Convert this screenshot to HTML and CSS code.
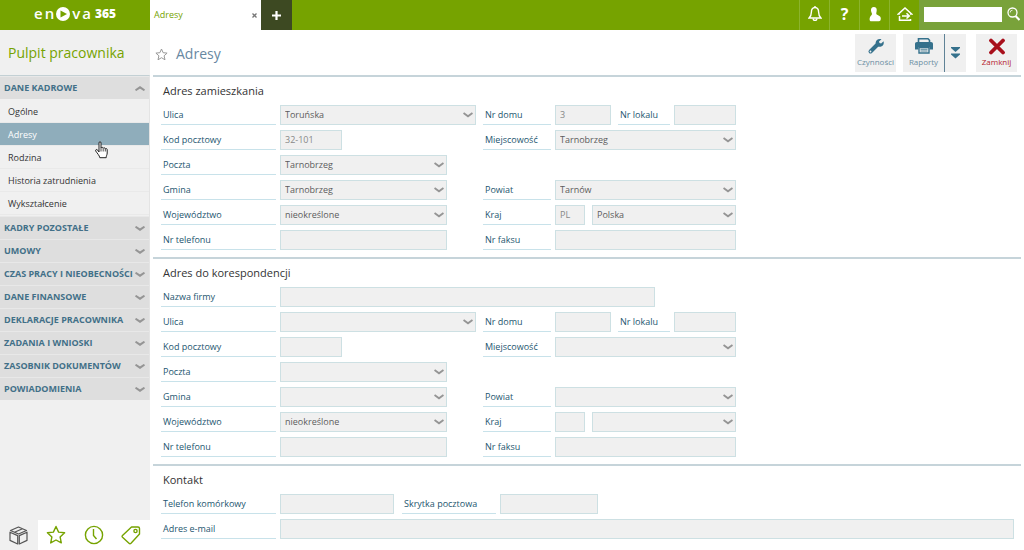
FILE: index.html
```html
<!DOCTYPE html>
<html lang="pl">
<head>
<meta charset="utf-8">
<title>Adresy - enova365</title>
<link rel="stylesheet" href="styles.css">
</head>
<body>
<header class="topbar">
  <div class="logo"><span>e</span><span>n</span>
    <svg width="14" height="14" viewBox="0 0 14 14"><circle cx="7" cy="7" r="7" fill="#fff"/><path d="M4.500 3.500 11 7 4.500 10.500z" fill="#76a300"/></svg>
    <span>v</span><span>a</span><b>365</b>
  </div>
  <div class="tab"><a href="#adresy">Adresy</a><button class="tab-close" aria-label="Zamknij kartę"><svg width="5" height="5" viewBox="0 0 5 5"><path d="M.5.5l4 4m0-4l-4 4" stroke="#777" stroke-width="1.3"/></svg></button></div>
  <button class="tab-add" aria-label="Nowa karta"><svg width="9" height="9" viewBox="0 0 9 9"><path d="M4.500 0v9M0 4.500h9" stroke="#fff" stroke-width="2.200"/></svg></button>
  <nav class="tools">
    <button aria-label="Powiadomienia"><svg width="14" height="16" viewBox="0 0 14 16" fill="none" stroke="#fff" stroke-width="1.4"><path d="M7 1.500C4.300 1.500 3.400 3.600 3.400 6c0 3-.6 4.300-2.300 6h11.800c-1.700-1.700-2.300-3-2.300-6 0-2.400-.9-4.500-3.600-4.500z"/><path d="M5.200 12.500a1.800 1.900 0 0 0 3.600 0M7 0v2"/></svg></button>
    <button class="help">?</button>
    <button aria-label="Użytkownik"><svg width="12" height="15" viewBox="0 0 12 15" fill="#fff"><path d="M4.800 0C7 0 7.900 1.500 7.700 3.500 7.600 5 7.200 5.800 7.300 7c.2 1 4.400 1.500 4.500 4.300 0 2-.5 3-2 3H2.500c-1.500 0-2-1-1.900-2.600C.8 9 3 8.300 3 7c0-1-.9-2-1-3.500C1.900 1.500 2.900 0 4.800 0z"/></svg></button>
    <button aria-label="Wyjście"><svg width="16" height="15" viewBox="0 0 16 15" fill="none" stroke="#fff" stroke-width="1.500"><path d="M2.500 9v4.200h11V12M2.800 7H1.500L8 1l6.500 6H13M5 9h7M9.500 6.300 12.300 9l-2.800 2.500"/></svg></button>
  </nav>
  <form class="search">
    <input type="search" aria-label="Szukaj">
    <button type="button" aria-label="Szukaj"><svg width="13" height="14" viewBox="0 0 13 14" fill="none" stroke="#fff"><circle cx="5.500" cy="5.500" r="4.500" stroke-width="1.300"/><path d="M3.200 5.500a2.300 2.300 0 0 1 2.300-2.300" stroke-width=".8"/><path d="m8.500 9 4 4" stroke-width="2.200"/></svg></button>
  </form>
</header>
<div class="shell">
  <aside class="sidebar">
    <h1 class="side-title">Pulpit pracownika</h1>
    <nav class="menu">
      <button class="group open">DANE KADROWE</button>
      <ul class="sub">
        <li><a href="#ogolne">Ogólne</a></li>
        <li class="current"><a href="#adresy">Adresy</a>
          <svg class="pointer" width="13" height="18" viewBox="0 0 13 18"><path d="M4 11V2c0-1.800 2-1.800 2 0v5c.3-1 2-1 2.200.3.400-.9 1.900-.7 2.100.6.500-.7 1.900-.5 1.900.8V12c0 2-1 2.500-1 4.700H4.800C4.500 14.500 2.400 12.600.7 10c-.5-1.500 1-2 1.900-1L4 11z" fill="#fff" stroke="#222"/><path d="M6 7v3.500M8.200 7.500v3M10.300 8v2.500" stroke="#222" stroke-width=".8"/></svg></li>
        <li><a href="#rodzina">Rodzina</a></li>
        <li><a href="#historia">Historia zatrudnienia</a></li>
        <li><a href="#wyksztalcenie">Wykształcenie</a></li>
      </ul>
      <button class="group">KADRY POZOSTAŁE</button>
      <button class="group">UMOWY</button>
      <button class="group">CZAS PRACY I NIEOBECNOŚCI</button>
      <button class="group">DANE FINANSOWE</button>
      <button class="group">DEKLARACJE PRACOWNIKA</button>
      <button class="group">ZADANIA I WNIOSKI</button>
      <button class="group">ZASOBNIK DOKUMENTÓW</button>
      <button class="group">POWIADOMIENIA</button>
    </nav>
    <div class="side-foot">
      <button class="active" aria-label="Moduły"><svg width="19" height="19" viewBox="0 0 19 19" fill="none" stroke="#555" stroke-width="1.200" stroke-linejoin="round"><path d="M9.500 1 17.500 4.500 9.500 8 1.500 4.500zM1 6.200 8.700 9.600V18L1 14.400zM18 6.200 10.300 9.600V18L18 14.400zM5.500 6.200 13.500 2.800"/></svg></button>
      <button aria-label="Ulubione"><svg width="20" height="20" viewBox="0 0 20 20" fill="none" stroke="#76a300" stroke-width="1.400" stroke-linejoin="round"><path d="m10 1.500 2.600 5.600 6 .7-4.500 4.100 1.200 6L10 15l-5.300 2.900 1.200-6L1.400 7.800l6-.7z"/></svg></button>
      <button aria-label="Historia"><svg width="20" height="20" viewBox="0 0 20 20" fill="none" stroke="#76a300" stroke-width="1.400"><circle cx="10" cy="10" r="8.600"/><path d="M9.500 4v6.500l3 3.500"/></svg></button>
      <button aria-label="Etykiety"><svg width="20" height="20" viewBox="0 0 20 20" fill="none" stroke="#76a300" stroke-width="1.400" stroke-linejoin="round"><path d="M1.500 10.500 10.500 2H17c1 0 1.500.5 1.500 1.500V9l-8.500 9.200c-.7.700-1.300.7-2 0l-6.500-6c-.6-.6-.6-1.100 0-1.700z"/><circle cx="14.500" cy="6" r="1.600"/></svg></button>
    </div>
  </aside>
  <main class="content">
    <div class="page-head">
      <svg width="13" height="13" viewBox="0 0 13 13" fill="none" stroke="#999" stroke-width="1"><path d="m6.500 1 1.600 3.700 4 .4-3 2.700.9 4-3.500-2.100L3 11.800l.9-4-3-2.700 4-.4z"/></svg>
      <h2>Adresy</h2>
      <div class="actions">
        <button class="action"><svg width="18" height="18" viewBox="0 0 18 18"><path d="M3.500 14.500 10 8" stroke="#35718c" stroke-width="4" stroke-linecap="round"/><path d="M14.500 2.200 12 4.600l.5 1.500 1.600.4 2.500-2.200c.6 2.200-.2 4.400-2.400 5.300-1.800.7-3.800 0-4.900-1.500-1-1.600-.9-3.700.6-5.100 1.300-1.200 3-1.300 4.600-.8z" fill="#35718c"/><circle cx="3.500" cy="14.500" r=".9" fill="#f0f0f0"/></svg><span>Czynności</span></button>
        <div class="split">
          <button class="action"><svg width="18" height="18" viewBox="0 0 18 18"><path d="M3.500 5V1.800h9.500l1.500 1.500V5" fill="#f0f0f0" stroke="#35718c" stroke-width="1.600"/><path d="M2 5h14c1.300 0 2 .7 2 2v5.500h-3.500V10h-11v2.500H0V7c0-1.300.7-2 2-2z" fill="#35718c"/><path d="M4 10.500h10V16H4z" fill="#f0f0f0" stroke="#35718c" stroke-width="1.400"/><path d="M5.500 12.300h7M5.500 14h7" stroke="#35718c" stroke-width=".8"/></svg><span>Raporty</span></button>
          <button class="more" aria-label="Więcej raportów"><svg width="9" height="12" viewBox="0 0 9 12" fill="#35718c"><path d="M0 0h9v1L4.500 5 0 1zM0 6.500h9v1l-4.500 4L0 7.500z"/></svg></button>
        </div>
        <button class="action close"><svg width="18" height="18" viewBox="0 0 18 18"><path d="M3 3.500 15 15.500M15 3.500 3 15.500" stroke="#a8101c" stroke-width="3.800" stroke-linecap="round"/></svg><span>Zamknij</span></button>
      </div>
    </div>

    <section class="block">
      <h3>Adres zamieszkania</h3>
      <div class="rows">
        <div class="row">
          <label for="a1">Ulica</label><div class="left"><select id="a1" class="w-street"><option>Toruńska</option></select></div>
          <label class="l2" for="a2">Nr domu</label><input id="a2" class="w-house" value="3"><label class="l3" for="a3">Nr lokalu</label><input id="a3" class="w-flat">
        </div>
        <div class="row">
          <label for="a4">Kod pocztowy</label><div class="left"><input id="a4" class="w-flat" value="32-101"></div>
          <label class="l2" for="a5">Miejscowość</label><select id="a5" class="w-right"><option>Tarnobrzeg</option></select>
        </div>
        <div class="row"><label for="a6">Poczta</label><select id="a6" class="w-left"><option>Tarnobrzeg</option></select></div>
        <div class="row">
          <label for="a7">Gmina</label><div class="left"><select id="a7" class="w-left"><option>Tarnobrzeg</option></select></div>
          <label class="l2" for="a8">Powiat</label><select id="a8" class="w-right"><option>Tarnów</option></select>
        </div>
        <div class="row">
          <label for="a9">Województwo</label><div class="left"><select id="a9" class="w-left"><option>nieokreślone</option></select></div>
          <label class="l2" for="a10">Kraj</label><input id="a10" class="w-code" value="PL"><select class="w-country" aria-label="Nazwa kraju"><option>Polska</option></select>
        </div>
        <div class="row">
          <label for="a11">Nr telefonu</label><div class="left"><input id="a11" class="w-left"></div>
          <label class="l2" for="a12">Nr faksu</label><input id="a12" class="w-right">
        </div>
      </div>
    </section>

    <section class="block">
      <h3>Adres do korespondencji</h3>
      <div class="rows">
        <div class="row"><label for="b0">Nazwa firmy</label><input id="b0" class="w-company"></div>
        <div class="row">
          <label for="b1">Ulica</label><div class="left"><select id="b1" class="w-street"><option></option></select></div>
          <label class="l2" for="b2">Nr domu</label><input id="b2" class="w-house"><label class="l3" for="b3">Nr lokalu</label><input id="b3" class="w-flat">
        </div>
        <div class="row">
          <label for="b4">Kod pocztowy</label><div class="left"><input id="b4" class="w-flat"></div>
          <label class="l2" for="b5">Miejscowość</label><select id="b5" class="w-right"><option></option></select>
        </div>
        <div class="row"><label for="b6">Poczta</label><select id="b6" class="w-left"><option></option></select></div>
        <div class="row">
          <label for="b7">Gmina</label><div class="left"><select id="b7" class="w-left"><option></option></select></div>
          <label class="l2" for="b8">Powiat</label><select id="b8" class="w-right"><option></option></select>
        </div>
        <div class="row">
          <label for="b9">Województwo</label><div class="left"><select id="b9" class="w-left"><option>nieokreślone</option></select></div>
          <label class="l2" for="b10">Kraj</label><input id="b10" class="w-code"><select class="w-country" aria-label="Nazwa kraju"><option></option></select>
        </div>
        <div class="row">
          <label for="b11">Nr telefonu</label><div class="left"><input id="b11" class="w-left"></div>
          <label class="l2" for="b12">Nr faksu</label><input id="b12" class="w-right">
        </div>
      </div>
    </section>

    <section class="block">
      <h3>Kontakt</h3>
      <div class="rows">
        <div class="row"><label for="c1">Telefon komórkowy</label><input id="c1" class="w-mobile"><label class="l4" for="c2">Skrytka pocztowa</label><input id="c2" class="w-box"></div>
        <div class="row"><label for="c3">Adres e-mail</label><input id="c3" type="email" class="w-full"></div>
      </div>
    </section>
  </main>
</div>
</body>
</html>
```
FILE: styles.css
```css
* { box-sizing: border-box; }
body {
  margin: 0;
  min-height: 100vh;
  display: flex;
  flex-direction: column;
  background: #fff;
  color: #333;
  font: 9px/14px "Open Sans", sans-serif;
}
button, input, select { font: inherit; color: inherit; margin: 0; padding: 0; border: 0; border-radius: 0; background: none; }
button { display: flex; align-items: center; justify-content: center; cursor: pointer; }
svg { display: block; flex: none; }
a { color: inherit; text-decoration: none; }
h1, h2, h3 { margin: 0; font-weight: 400; }

/* top bar */
.topbar { display: flex; height: 30px; background: #76a300; color: #fff; }
.logo { width: 150px; display: flex; align-items: center; justify-content: center; gap: 2px; font-size: 15px; font-weight: 600; line-height: 26px; padding-bottom: 4px; }
.logo svg { margin-top: 2px; }
.logo b { font-size: 12px; line-height: 28px; margin: 2px 0 0 2px; }
.tab { width: 111px; padding: 0 4px; display: flex; align-items: center; justify-content: space-between; background: #fff; color: #76a300; }
.tab-add { width: 31px; background: #3d4922; }
.tools { margin-left: auto; display: flex; }
.tools button { width: 30px; border-left: 1px solid #8cb42c; padding-bottom: 2px; }
.tools .help { font-size: 16px; font-weight: 700; }
.search { width: 105px; display: flex; align-items: center; gap: 5px; padding: 0 4px 2px 5px; background: #79a23a; }
.search input { flex: 1; min-width: 0; height: 15px; background: #fff; color: #444; }

/* sidebar */
.shell { flex: 1; display: flex; }
.sidebar { width: 150px; flex: none; display: flex; flex-direction: column; background: #f0f0f0; }
.side-title { height: 45px; padding-left: 8px; font-size: 14px; line-height: 45px; color: #76a300; white-space: nowrap; }
.menu { border-top: 1px solid #c3d0d4; border-right: 1px solid #e4e4e4; }
.group {
  width: 100%; height: 23px; padding: 0 4px; justify-content: space-between;
  border-top: 1px solid #e8e8e8; background: #dedede; color: #427088;
  font-weight: 700; white-space: nowrap;
}
.group::after {
  content: ""; width: 10px; height: 5px;
  background: url("data:image/svg+xml,%3Csvg xmlns='http://www.w3.org/2000/svg' width='10' height='5'%3E%3Cpath d='M.5.7 5 3.700 9.500.7' fill='none' stroke='%23959595' stroke-width='2'/%3E%3C/svg%3E");
}
.group.open::after { transform: rotate(180deg); }
.sub { list-style: none; margin: 0; padding: 1px 0; }
.sub li { position: relative; height: 23px; padding-left: 8px; line-height: 23px; border-bottom: 1px solid #e9e9e9; }
.sub .current { background: #8fadbb; color: #fff; }
.pointer { position: absolute; left: 95px; top: 18px; z-index: 1; }
.side-foot { display: flex; height: 30px; margin-top: auto; background: #fff; }
.side-foot button { flex: 1; }
.side-foot .active { background: #f0f0f0; }

/* page */
.content { flex: 1; min-width: 0; padding: 0 3px; }
.page-head { height: 45px; display: flex; align-items: center; gap: 8px; padding-left: 2px; padding-right: 4px; }
.page-head > svg { margin-top: 3px; }
.page-head h2 { padding-top: 2px; font-size: 14px; line-height: 24px; color: #6888a2; }
.actions { margin-left: auto; display: flex; }
.action { width: 41px; height: 38px; flex-direction: column; gap: 1px; background: #f0f0f0; color: #6c8fa3; font-size: 8px; line-height: 12px; }
.split { display: flex; margin: 0 10px 0 7px; }
.more { width: 22px; border-left: 1px solid #5f8296; background: #f0f0f0; }
.close { color: #b5202c; }

.block { border-top: 2px solid #c6d4da; padding-bottom: 7px; }
.block h3 { padding-left: 10px; font-size: 11px; line-height: 28px; }
.rows { display: flex; flex-direction: column; gap: 5px; padding: 0 7px 0 8px; }
.row { display: flex; height: 20px; gap: 4px; }
.row label { width: 115px; flex: none; padding-left: 2px; line-height: 19px; border-bottom: 1px solid #c8e2ea; color: #24566f; white-space: nowrap; }
.row .l2 { width: 68px; }
.row .l3 { width: 52px; margin-left: 3px; }
.row .l4 { width: 94px; margin-left: 4px; }
.row input, .row select { height: 20px; padding: 0 4px; border: 1px solid #cde0e3; background-color: #f0f0f0; color: #5c5c5c; }
.row input { padding-bottom: 1px; color: #888; }
.row select {
  appearance: none;
  background-image: url("data:image/svg+xml,%3Csvg xmlns='http://www.w3.org/2000/svg' width='10' height='6'%3E%3Cpath d='M.5 1 5 4.200 9.500 1' fill='none' stroke='%23959595' stroke-width='2'/%3E%3C/svg%3E");
  background-repeat: no-repeat;
  background-position: right 2px center;
}
.left { width: 199px; }
.w-street { width: 196px; }
.w-left { width: 167px; }
.w-right { width: 181px; }
.w-house { width: 56px; }
.w-flat { width: 62px; }
.w-code { width: 30px; }
.row .w-country { width: 144px; margin-left: 3px; }
.w-company { width: 375px; }
.w-mobile { width: 114px; }
.w-box { width: 98px; }
.w-full { flex: 1; min-width: 0; }
```
